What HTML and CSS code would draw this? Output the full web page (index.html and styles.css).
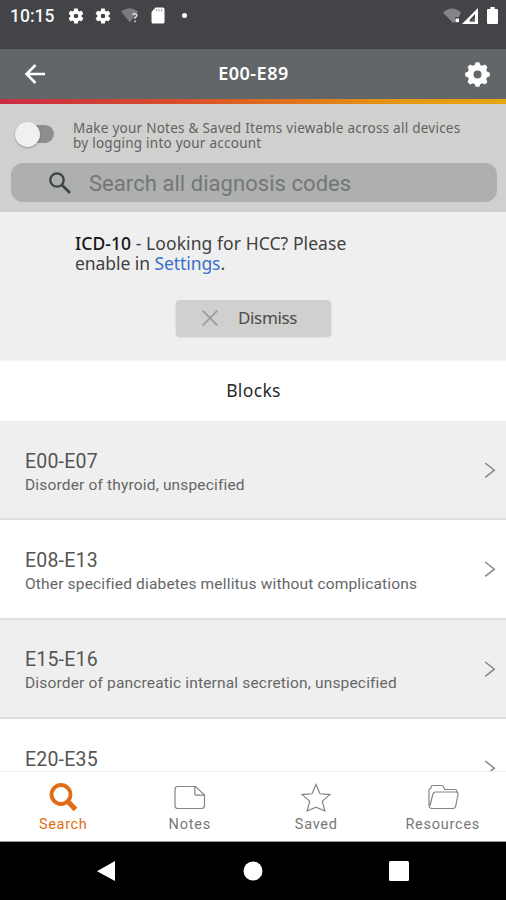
FILE: index.html
```html
<!DOCTYPE html>
<html lang="en">
<head>
<meta charset="utf-8">
<title>E00-E89</title>
<link rel="stylesheet" href="styles.css">
</head>
<body>
<svg class="defs" width="0" height="0" aria-hidden="true">
  <symbol id="cog" viewBox="0 0 24 24"><path fill-rule="evenodd" d="M19.4 13a7.5 7.5 0 0 0 0-2l2.1-1.6a.5.5 0 0 0 .1-.7l-2-3.4a.5.5 0 0 0-.6-.2l-2.5 1a7.300 7.300 0 0 0-1.700-1L14.400 2.400a.5.5 0 0 0-.5-.4h-4a.5.5 0 0 0-.5.4L9.100 5.100a7.500 7.500 0 0 0-1.700 1l-2.500-1a.5.5 0 0 0-.6.2l-2 3.400a.5.5 0 0 0 .1.700L4.500 11a7.900 7.900 0 0 0 0 2l-2.100 1.600a.5.5 0 0 0-.1.700l2 3.400c.1.200.4.300.6.200l2.500-1c.5.400 1.100.7 1.700 1l.4 2.700c0 .2.200.4.500.4h4c.2 0 .5-.2.500-.4l.4-2.700a7.500 7.500 0 0 0 1.700-1l2.500 1c.2.100.5 0 .6-.2l2-3.400a.5.5 0 0 0-.1-.7zM12 15.100a3.100 3.100 0 1 1 0-6.200 3.100 3.100 0 0 1 0 6.200z"/></symbol>
  <symbol id="chevron" viewBox="0 0 12 18"><path d="M1.200 2 10.300 9.200 1.200 16.400" fill="none" stroke="currentColor" stroke-width="1.500"/></symbol>
</svg>
<div class="screen">
  <div class="status">
    <span class="time">10:15</span>
    <svg class="s-cog" viewBox="0 0 24 24"><use href="#cog"/></svg>
    <svg class="s-cog second" viewBox="0 0 24 24"><use href="#cog"/></svg>
    <svg class="s-wifi" viewBox="0 0 18 16"><path fill="#7b7b7d" d="M0 3.500Q8.500-3 17 3.500L9 14.500z"/><path d="M11.500 7q2-2.500 4-.5 1 1.600-1.500 3.200v1M14 12.600v1.600" fill="none" stroke="#d5d5d5" stroke-width="1.600"/></svg>
    <svg class="s-card" viewBox="0 0 14 17"><path d="M4.500.5H12q1.500 0 1.500 1.500v13q0 1.500-1.500 1.500H2Q.5 16.500.5 15V5z"/><path d="M5.500 2.200v2M8 2.200v2M10.500 2.200v2" stroke="#999" stroke-width="1.200"/></svg>
    <span class="dot"></span>
    <div class="status-right">
      <svg class="r-wifi" viewBox="0 0 18 16"><path fill="#858587" d="M0 4.500Q9-3.500 18 4.500L16 9h-4v5l-2 1z"/><path d="M12.500 10.500h3.500v3.700h-3.500z"/></svg>
      <svg class="r-cell" viewBox="0 0 16 16"><path fill-rule="evenodd" d="M0 16 16 0v16zM7.800 11.800v2H13V6z"/><path fill="#aaa" d="M8 14h5V9z" opacity=".35"/></svg>
      <svg class="r-batt" viewBox="0 0 11 17"><path d="M3.300 0h4.400v2H10q1 0 1 1v13q0 1-1 1H1q-1 0-1-1V3q0-1 1-1h2.300z"/></svg>
    </div>
  </div>
  <header class="bar">
    <svg class="back" viewBox="0 0 20 20"><path d="M10.500 1 1.500 10l9 9M1.800 10H20" fill="none" stroke="#fff" stroke-width="2.500"/></svg>
    <h1>E00-E89</h1>
    <svg class="gear" viewBox="-12.500 -12.500 25 25"><g fill="#fff"><path fill-rule="evenodd" d="M0-10A10 10 0 0 1 0 10 10 10 0 0 1 0-10ZM0-4A4 4 0 0 0 0 4 4 4 0 0 0 0-4Z"/><path id="tooth" d="M-3.200-8.500-1.800-12.300h3.600L3.200-8.500z"/><use href="#tooth" transform="rotate(45)"/><use href="#tooth" transform="rotate(90)"/><use href="#tooth" transform="rotate(135)"/><use href="#tooth" transform="rotate(180)"/><use href="#tooth" transform="rotate(225)"/><use href="#tooth" transform="rotate(270)"/><use href="#tooth" transform="rotate(315)"/></g></svg>
  </header>
  <div class="stripe"></div>
  <section class="panel">
    <div class="sync">
      <span class="toggle"><span class="knob"></span></span>
      <p class="sync-text">Make your Notes &amp; Saved Items viewable across all devices<br>by logging into your account</p>
    </div>
    <div class="search">
      <svg viewBox="0 0 22 22"><circle cx="8" cy="8" r="6.700" fill="none" stroke="#3f4242" stroke-width="2.300"/><path d="m13 13 8 8" stroke="#3f4242" stroke-width="2.700"/></svg>
      <span>Search all diagnosis codes</span>
    </div>
  </section>
  <section class="notice">
    <div class="notice-text"><p><b>ICD-10</b> - Looking for HCC? Please</p><p class="tight">enable in <a>Settings</a>.</p></div>
    <div class="dismiss">
      <svg viewBox="0 0 16 16"><path d="m.7.7 14.600 14.600M15.300.7.7 15.300" stroke="#9d9d9b" stroke-width="1.900"/></svg>
      <span>Dismiss</span>
    </div>
  </section>
  <h2>Blocks</h2>
  <main class="list">
    <div class="row"><div><div class="code">E00-E07</div><div class="desc">Disorder of thyroid, unspecified</div></div><svg class="chev"><use href="#chevron"/></svg></div>
    <div class="row"><div><div class="code">E08-E13</div><div class="desc">Other specified diabetes mellitus without complications</div></div><svg class="chev"><use href="#chevron"/></svg></div>
    <div class="row"><div><div class="code">E15-E16</div><div class="desc">Disorder of pancreatic internal secretion, unspecified</div></div><svg class="chev"><use href="#chevron"/></svg></div>
    <div class="row"><div><div class="code">E20-E35</div></div><svg class="chev"><use href="#chevron"/></svg></div>
  </main>
  <nav class="tabs">
    <div class="tab active"><svg viewBox="0 0 32 32"><circle cx="14" cy="13.500" r="9.500" fill="none" stroke="currentColor" stroke-width="3.800"/><path d="m20.500 20 8 8.500" stroke="currentColor" stroke-width="5"/></svg><span>Search</span></div>
    <div class="tab"><svg viewBox="0 0 32 32"><path d="M4 5.500h17.500L30.500 14v10.500q0 3-3 3H4q-3 0-3-3v-16q0-3 3-3zM20.800 5.500V13q0 1.200 1.200 1.200h8.500" class="line"/></svg><span>Notes</span></div>
    <div class="tab"><svg viewBox="0 0 32 32"><path d="m16 3.500 4 9.300 10 .8-7.700 6.500 2.600 9.900L16 26.200 7.100 30l2.600-9.900L2 13.600l10-.8z" class="line"/></svg><span>Saved</span></div>
    <div class="tab"><svg viewBox="0 0 32 32"><path d="M2 24V9.500q0-2 2-2V6q0-1.500 1.500-1.500h9Q16.500 4.500 17 7l.6 1.500h9.900q2.500 0 2.500 2v1M2 24q0 3.500 3 3.500h21q2 0 2.600-2l2.400-12q.4-2.500-2-2.500H8.500q-2 0-2.600 2L3 24.500" class="line"/></svg><span>Resources</span></div>
  </nav>
  <div class="sysnav">
    <svg viewBox="0 0 18 20"><path d="M18 0v20L0 10.300z"/></svg>
    <svg viewBox="0 0 20 20"><circle cx="10" cy="10" r="9.500"/></svg>
    <svg viewBox="0 0 20 20"><rect width="20" height="20" rx="1.500"/></svg>
  </div>
</div>
</body>
</html>
```
FILE: styles.css
```css
* { box-sizing: border-box; }
body { margin: 0; font-family: "Noto Sans", sans-serif; }
p, h1, h2 { margin: 0; font-weight: 400; }
svg { display: block; flex: none; }
.defs { position: absolute; }
.screen { width: 506px; height: 900px; display: flex; flex-direction: column; overflow: hidden; background: #fff; }
.screen > * { flex: none; }

.status { height: 49px; background: #434447; fill: #fff; color: #f4f4f4; display: flex; align-items: center; padding: 0 8px 18px 10px; }
.time { font: 500 17.500px Roboto, sans-serif; width: 57px; padding-top: 1px; }
.s-cog { width: 18px; height: 18px; }
.second { margin-left: 9px; }
.s-wifi { width: 18px; height: 16px; margin-left: 9px; }
.s-card { width: 14px; height: 17px; margin-left: 12px; }
.dot { width: 5px; height: 5px; border-radius: 50%; background: #fff; margin-left: 17px; }
.status-right { margin-left: auto; display: flex; align-items: center; }
.r-wifi { width: 18px; height: 16px; }
.r-cell { width: 16px; height: 16px; margin-left: 1px; }
.r-batt { width: 11px; height: 17px; margin-left: 9px; }

.bar { height: 50px; background: #626669; display: grid; grid-template-columns: 80px 1fr 80px; align-items: center; padding: 0 16px 0 25px; }
.back { width: 20px; height: 20px; }
.bar h1 { color: #fff; font-size: 18px; font-weight: 600; line-height: 48px; letter-spacing: .5px; margin-left: -8px; padding-bottom: 2px; white-space: nowrap; text-align: center; }
.gear { width: 25px; height: 25px; justify-self: end; }
.stripe { height: 5px; background: linear-gradient(90deg, #c82c44, #d94d2b 35%, #df6f1d 55%, #e59812 80%, #e6a50d); }

.panel { height: 108px; background: #d0d1cf; padding: 16px 9px 0 11px; }
.sync { display: flex; height: 43px; }
.toggle { width: 36px; height: 18px; margin: 5px 0 0 7px; border-radius: 9px; background: #8d8d8d; }
.knob { display: block; width: 25px; height: 25px; margin: -3.500px 0 0 -3px; border-radius: 50%; background: #f0f0f0; box-shadow: 0 1px 2px rgba(0,0,0,.3); }
.sync-text { margin-left: 19px; color: #626261; font-size: 13.500px; line-height: 15px; letter-spacing: .25px; white-space: nowrap; padding-top: 1px; }
.search { height: 39px; border-radius: 12px; background: #adb0ae; display: flex; align-items: center; padding-left: 38px; }
.search svg { width: 22px; height: 22px; }
.search span { font: 22px Roboto, sans-serif; letter-spacing: .05px; color: #747775; margin-left: 18px; padding-top: 1px; white-space: nowrap; }

.notice { height: 148px; background: #efefef; padding: 21px 0 0 75px; color: #414141; }
.notice-text { font-size: 17.500px; line-height: 20px; height: 67px; letter-spacing: .07px; white-space: nowrap; }
.tight { letter-spacing: -.07px; }
.notice b { color: #151515; font-weight: 500; }
.notice a { color: #3b6fc9; }
.dismiss { width: 155px; height: 36px; margin-left: 101px; border-radius: 4px; background: #d0d0ce; box-shadow: 0 1px 2px rgba(0,0,0,.18); display: flex; align-items: center; padding-left: 26px; font-size: 17px; letter-spacing: -.35px; line-height: 34px; color: #4b4b4b; }
.dismiss span { padding-bottom: 1px; }
.dismiss svg { width: 16px; height: 16px; margin-right: 20px; }

.screen > h2 { height: 61px; line-height: 58px; text-align: center; font-size: 17.500px; letter-spacing: .35px; padding-left: 1px; color: #292929; border-top: 1px solid #f7f7f7; }
.list { height: 350px; overflow: hidden; font-family: Roboto, sans-serif; }
.row { height: 99.400px; border-bottom: 2px solid #dfdfdf; padding: 28.600px 10px 0 25px; display: flex; justify-content: space-between; }
.row:nth-child(odd) { background: #efefef; }
.code { font-size: 19.500px; line-height: 24px; letter-spacing: .2px; color: #555; }
.desc { font-size: 15.500px; line-height: 23px; letter-spacing: .17px; color: #666; white-space: nowrap; }
.chev { width: 12px; height: 18px; margin-top: 11.400px; color: #888; }

.tabs { height: 71px; display: grid; grid-template-columns: repeat(4, 1fr); border-top: 1px solid #eee; border-bottom: 1px solid #999; background: #fff; }
.tab { display: flex; flex-direction: column; align-items: center; padding-top: 9px; color: #777; font: 14.500px/18px Roboto, sans-serif; letter-spacing: .75px; }
.tab svg { width: 32px; height: 32px; margin-bottom: 3px; }
.tab.active { color: #e06d16; letter-spacing: .65px; }
.line { fill: none; stroke: #858585; stroke-width: 1.200; }
.sysnav { height: 58px; background: #000; fill: #fff; display: flex; justify-content: space-between; padding: 19px 97px 0 96px; }
.sysnav svg { width: 20px; height: 20px; }
```
